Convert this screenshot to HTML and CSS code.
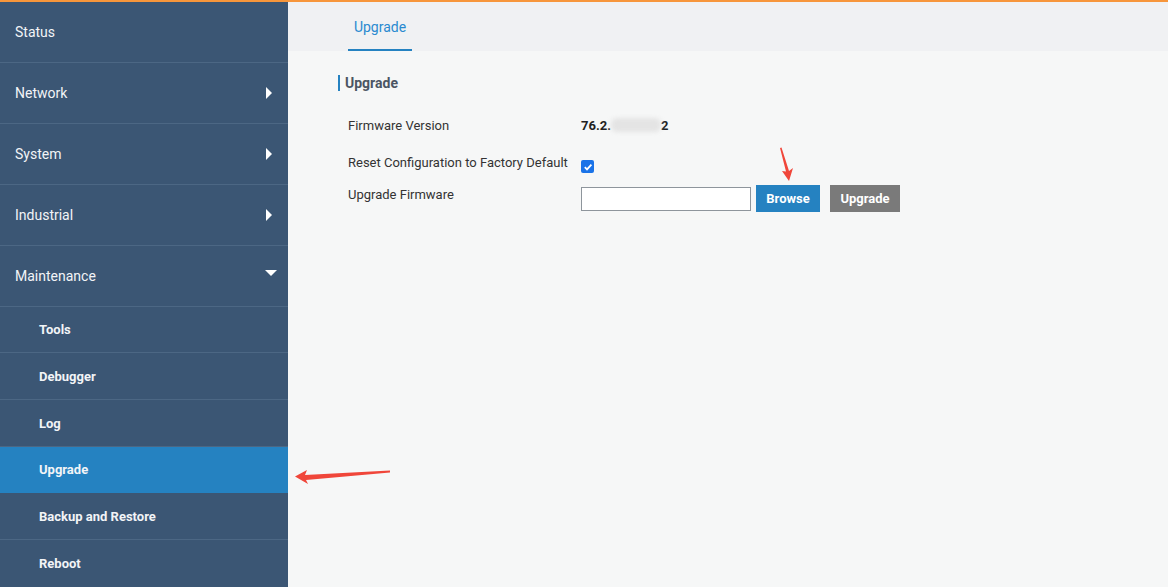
FILE: index.html
```html
<!DOCTYPE html>
<html>
<head>
<meta charset="utf-8">
<link rel="stylesheet" href="styles.css">
</head>
<body>
<div class="topline"></div>
<div class="app">
  <nav class="sidebar">
    <div class="nav-item">Status</div>
    <div class="nav-item">Network<span class="caret-right"></span></div>
    <div class="nav-item">System<span class="caret-right"></span></div>
    <div class="nav-item">Industrial<span class="caret-right"></span></div>
    <div class="nav-item">Maintenance<span class="caret-down"></span></div>
    <div class="sub-item first">Tools</div>
    <div class="sub-item">Debugger</div>
    <div class="sub-item">Log</div>
    <div class="sub-item active">Upgrade</div>
    <div class="sub-item">Backup and Restore</div>
    <div class="sub-item last">Reboot</div>
  </nav>
  <main class="main">
    <div class="tabs">
      <div class="tab">Upgrade</div>
    </div>
    <div class="content">
      <h2 class="section-title">Upgrade</h2>
      <div class="row row-version">
        <div class="label">Firmware Version</div>
        <div class="value">76.2.<span class="blur"></span>2</div>
      </div>
      <div class="row row-reset">
        <div class="label">Reset Configuration to Factory Default</div>
        <div class="value"><span class="checkbox"><svg width="10" height="10" viewBox="0 0 10 10"><path d="M1.8 5.2 L4 7.4 L8.4 2.6" fill="none" stroke="#fff" stroke-width="1.8"/></svg></span></div>
      </div>
      <div class="row row-upgrade">
        <div class="label">Upgrade Firmware</div>
        <div class="value controls">
          <span class="file-input"></span>
          <button class="btn btn-blue">Browse</button>
          <button class="btn btn-gray">Upgrade</button>
        </div>
      </div>
    </div>
  </main>
</div>
<svg class="arrow arrow-left" width="100" height="20" viewBox="0 0 100 20">
  <path d="M1 9.5 L13 3 L11 8 L96 3.5 L96 5.5 L12 13 L14 17 Z" fill="#f0463a"/>
</svg>
<svg class="arrow arrow-down" width="20" height="40" viewBox="0 0 20 40">
  <path d="M1 1 L2.5 0.5 L10 24 L14 21 L10 34 L3 24 L7 24.5 Z" fill="#f0463a"/>
</svg>
</body>
</html>
```
FILE: styles.css
```css
* { box-sizing: border-box; }
html, body { margin: 0; padding: 0; }
body {
  width: 1168px;
  height: 587px;
  overflow: hidden;
  font-family: Roboto, "Liberation Sans", Arial, sans-serif;
  background: #f6f7f7;
  position: relative;
}
.topline { height: 2px; background: #f7963b; }
.app { display: flex; height: 585px; }
.sidebar {
  width: 288px;
  flex: none;
  background: #3b5674;
  color: #fff;
  display: flex;
  flex-direction: column;
  overflow: hidden;
}
.nav-item {
  height: 61px;
  flex: none;
  border-bottom: 1px solid #4c6784;
  display: flex;
  align-items: center;
  padding: 0 15px;
  font-size: 14px;
  position: relative;
  color: #f2f4f7;
}
.caret-right {
  position: absolute;
  right: 16px;
  top: 50%;
  margin-top: -6px;
  width: 0; height: 0;
  border-top: 6px solid transparent;
  border-bottom: 6px solid transparent;
  border-left: 6px solid #fff;
}
.caret-down {
  position: absolute;
  right: 11px;
  top: 50%;
  margin-top: -6px;
  width: 0; height: 0;
  border-left: 6px solid transparent;
  border-right: 6px solid transparent;
  border-top: 6px solid #fff;
}
.sub-item {
  height: 47px;
  flex: none;
  border-bottom: 1px solid #4c6784;
  display: flex;
  align-items: center;
  padding-left: 39px;
  font-size: 13px;
  font-weight: 700;
  color: #f2f4f7;
}
.sub-item.first { height: 46px; }
.sub-item.active { background: #2582c1; border-bottom-color: #2582c1; height: 46px; }
.sub-item.last { border-bottom: none; }
.main { flex: 1; display: flex; flex-direction: column; }
.tabs {
  height: 49px;
  background: #f0f1f3;
  display: flex;
  padding-left: 60px;
}
.tab {
  height: 49px;
  display: flex;
  align-items: center;
  padding-top: 2px;
  font-size: 14px;
  color: #2a8ad0;
  border-bottom: 2px solid #2582c1;
  width: 64px;
  justify-content: center;
}
.content { padding: 24px 0 0 50px; }
.section-title {
  margin: 0 0 27px 0;
  font-size: 14px;
  font-weight: 700;
  color: #4b5563;
  border-left: 2px solid #2582c1;
  padding-left: 5px;
  line-height: 16px;
  height: 16px;
}
.row { display: flex; font-size: 13px; color: #333; line-height: 16px; }
.label { width: 243px; padding-left: 10px; flex: none; }
.row-version { height: 37px; }
.row-version .value { font-weight: 700; color: #222; }
.blur {
  display: inline-block;
  width: 50px;
  height: 14px;
  vertical-align: -2px;
  background: #e4e4e4;
  filter: blur(2px);
  border-radius: 6px;
}
.row-reset { height: 32px; }
.checkbox {
  width: 13px;
  height: 13px;
  background: #1a73e8;
  border-radius: 2px;
  margin-top: 5px;
  display: flex;
  align-items: center;
  justify-content: center;
}
.controls { display: flex; align-items: flex-start; margin-top: -2px; }
.file-input {
  width: 170px;
  height: 24px;
  border: 1px solid #8e959c;
  background: #fff;
  margin-top: 2px;
}
.btn {
  height: 27px;
  border: none;
  color: #fff;
  font-family: Roboto, "Liberation Sans", Arial, sans-serif;
  font-size: 13px;
  font-weight: 700;
  padding: 0;
}
.btn-blue { background: #2582c1; width: 64px; margin-left: 5px; }
.btn-gray { background: #7a7a7a; width: 70px; margin-left: 10px; }
.arrow { position: absolute; }
.arrow-left { left: 294px; top: 467px; }
.arrow-down { left: 779px; top: 147px; }
```
